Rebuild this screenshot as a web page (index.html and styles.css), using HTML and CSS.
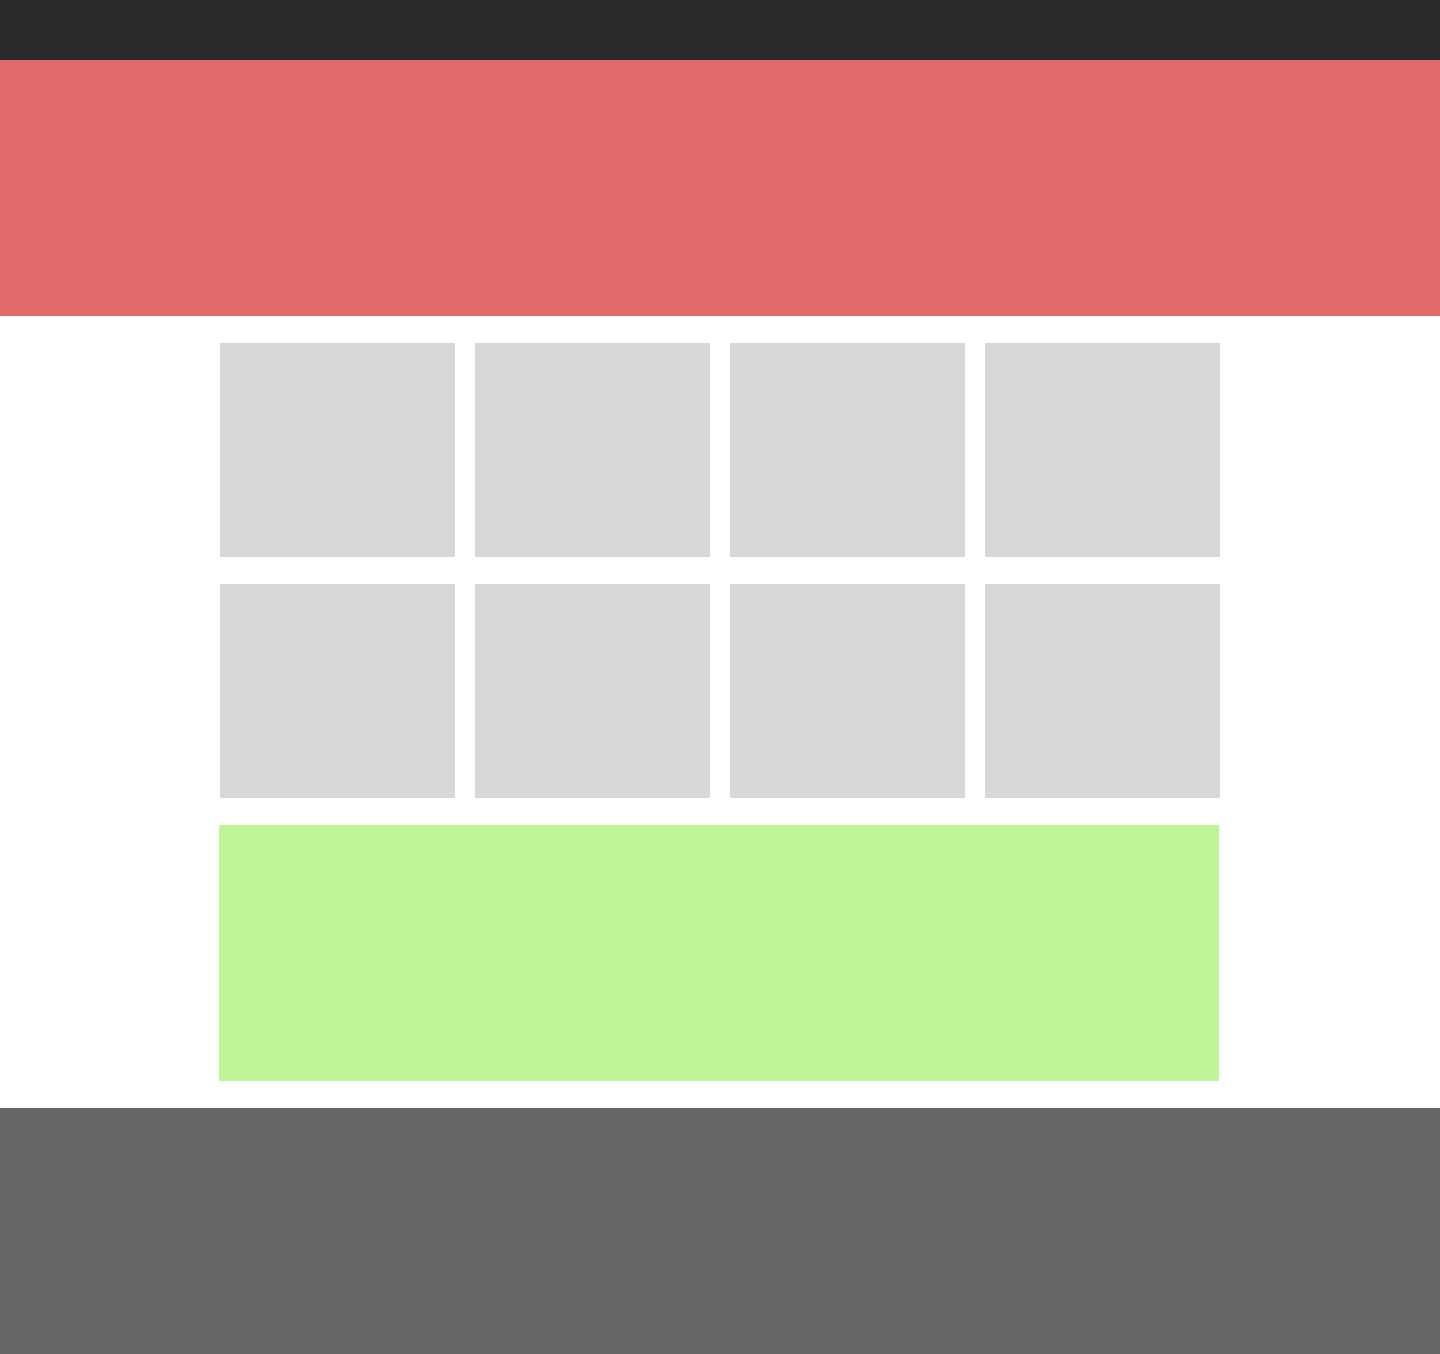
FILE: index.html
```html
<!DOCTYPE html>
<html lang="en">
<head>
    <meta charset="UTF-8">
    <meta name="viewport" content="width=device-width, initial-scale=1.0">
    <title>Layout</title>
    <link rel="stylesheet" href="styles.css">
</head>
<body>
    <header class="topbar"></header>
    <section class="hero"></section>

    <main class="content">
        <div class="grid">
            <div class="tile"></div>
            <div class="tile"></div>
            <div class="tile"></div>
            <div class="tile"></div>
            <div class="tile"></div>
            <div class="tile"></div>
            <div class="tile"></div>
            <div class="tile"></div>
        </div>
        <div class="banner"></div>
    </main>

    <footer class="footer"></footer>
</body>
</html>
```

FILE: styles.css
```css
body {
    margin: 0;
    padding: 0;
    font-family: 'Liberation Sans', Arial, sans-serif;
    background-color: #fff;
}

.topbar {
    height: 60px;
    background-color: #2a2a2a;
}

.hero {
    height: 256px;
    background-color: #e06b6a;
}

.content {
    width: 1000px;
    margin: 0 auto;
    padding: 27px 0;
    display: flex;
    flex-direction: column;
    gap: 27px;
}

.grid {
    display: grid;
    grid-template-columns: repeat(4, 1fr);
    column-gap: 20px;
    row-gap: 27px;
}

.tile {
    height: 214px;
    background-color: #d8d8d8;
}

.banner {
    height: 256px;
    margin-left: -1px;
    margin-right: 1px;
    background-color: #c0f597;
}

.footer {
    height: 246px;
    background-color: #666;
}
```
